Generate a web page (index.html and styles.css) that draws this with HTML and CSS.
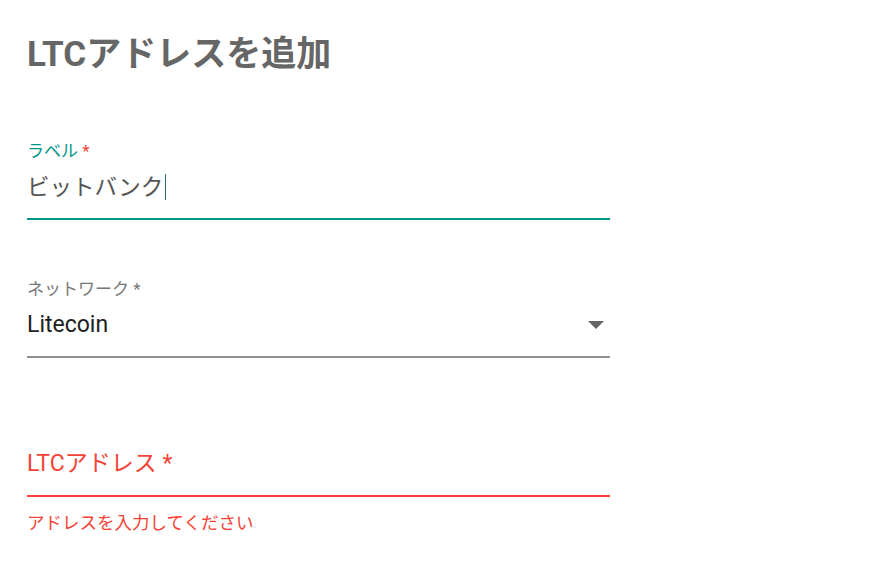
FILE: index.html
```html
<!DOCTYPE html>
<html lang="ja">
<head>
<meta charset="utf-8">
<title>LTCアドレスを追加</title>
<link rel="stylesheet" href="styles.css">
</head>
<body>
<div class="page">
  <h1 class="title">LTCアドレスを追加</h1>

  <div class="field field-focused">
    <div class="label label-focused">ラベル<span class="req req-error"> *</span></div>
    <div class="input">
      <span class="value value-ja">ビットバンク</span><span class="caret"></span>
    </div>
  </div>

  <div class="field field-normal">
    <div class="label label-normal">ネットワーク<span class="req"> *</span></div>
    <div class="input input-select">
      <span class="value">Litecoin</span>
      <svg class="arrow" width="16" height="8" viewBox="0 0 16 8"><path d="M0 0 L16 0 L8 8 Z" fill="#666"/></svg>
    </div>
  </div>

  <div class="field field-error">
    <div class="label"></div>
    <div class="input">
      <span class="placeholder-label">LTCアドレス<span class="req"> *</span></span>
    </div>
  </div>
  <div class="helper">アドレスを入力してください</div>
</div>
</body>
</html>
```

FILE: styles.css
```css
html, body {
  margin: 0;
  padding: 0;
  background: #ffffff;
}

body {
  font-family: Roboto, "Noto Sans CJK JP", sans-serif;
}

.page {
  padding: 0 0 0 27px;
  display: flex;
  flex-direction: column;
}

.title {
  margin: 35px 0 0 0;
  font-size: 35px;
  line-height: 40px;
  font-weight: 700;
  color: #666666;
  letter-spacing: 0;
}

.field {
  width: 583px;
  display: flex;
  flex-direction: column;
  margin-top: 59px;
}

.field-focused {
  margin-top: 66px;
}

.field-error {
  margin-top: 60px;
}

.label {
  height: 20px;
  font-size: 17px;
  line-height: 20px;
  white-space: nowrap;
}

.label-focused {
  color: #009688;
}

.label-normal {
  color: #777777;
}

.req-error {
  color: #f44336;
}

.input {
  height: 30px;
  padding: 11px 0 16px 0;
  font-size: 23px;
  line-height: 30px;
  display: flex;
  align-items: center;
  border-bottom: 2px solid #8f8f8f;
}

.field-focused .input {
  border-bottom-color: #009688;
}

.field-error .input {
  border-bottom-color: #f44336;
}

.value {
  color: #212121;
}

.value-ja {
  color: #555555;
  font-size: 22.5px;
}

.caret {
  width: 1px;
  height: 26px;
  margin-left: 2px;
  background: #2c6e66;
}

.input-select {
  justify-content: space-between;
}

.arrow {
  margin-right: 6px;
  display: block;
}

.placeholder-label {
  color: #f44336;
  font-size: 23px;
}

.helper {
  margin-top: 16px;
  font-size: 17.5px;
  line-height: 20px;
  color: #f44336;
}
```
